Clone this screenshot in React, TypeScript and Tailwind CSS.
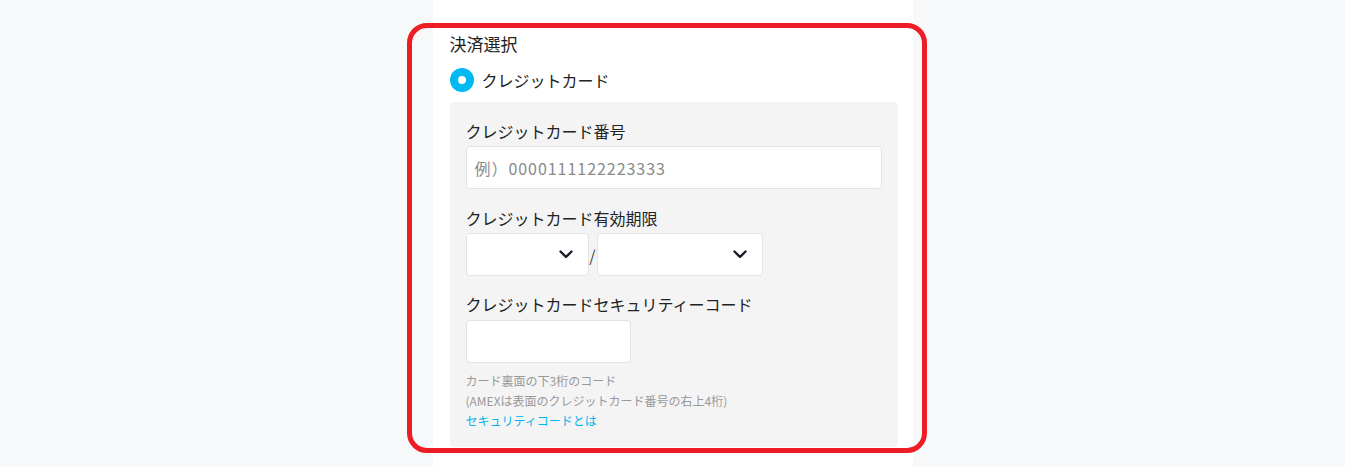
import React from 'react';

const Chevron: React.FC = () => (
  <svg className="w-[14px] h-[9px] text-[#1c1c28]" viewBox="0 0 14 9" fill="none">
    <path d="M1.5 1.5L7 7l5.5-5.5" stroke="currentColor" strokeWidth={2.4} strokeLinecap="round" strokeLinejoin="round" />
  </svg>
);

const SelectBox: React.FC<{ width: string }> = ({ width }) => (
  <div className={`${width} h-[43px] bg-white border border-[#e3e3e3] rounded-[4px] flex items-center justify-end pr-[15px]`}>
    <Chevron />
  </div>
);

export default function App() {
  return (
    <div
      className="min-h-[467px] bg-[#f7f8fa] text-[#222]"
      style={{ fontFamily: '"Noto Sans CJK JP", "Noto Sans", sans-serif' }}
    >
      <div className="relative mx-auto w-[480px] min-h-[467px] bg-white pl-[17px] pr-[15px] pt-[32px]">
        <h2 className="text-[17px] leading-[24px]">決済選択</h2>

        <label className="mt-[12px] flex items-center gap-[8px] h-[24px]">
          <span className="w-[24px] h-[24px] rounded-full bg-[#00b9f2] flex items-center justify-center">
            <span className="w-[8px] h-[8px] rounded-full bg-white" />
          </span>
          <span className="text-[16px] leading-[24px]">クレジットカード</span>
        </label>

        <div className="mt-[10px] bg-[#f4f4f4] rounded-[4px] px-[16px] pt-[17px] pb-[16px]">
          <p className="text-[16px] leading-[24px] mb-[3px]">クレジットカード番号</p>
          <div className="h-[43px] bg-white border border-[#e3e3e3] rounded-[4px] flex items-center pl-[8px] text-[16px] text-[#8a8a8a] tracking-[0.06em]">
            例）0000111122223333
          </div>

          <p className="text-[16px] leading-[24px] mt-[17px] mb-[3px]">クレジットカード有効期限</p>
          <div className="flex items-center">
            <SelectBox width="w-[123px]" />
            <span className="w-[8px] text-center text-[16px] text-[#444]">/</span>
            <SelectBox width="w-[166px]" />
          </div>

          <p className="text-[16px] leading-[24px] mt-[16px] mb-[4px]">クレジットカードセキュリティーコード</p>
          <div className="w-[165px] h-[43px] bg-white border border-[#e3e3e3] rounded-[4px]" />

          <div className="mt-[8px] text-[12px] leading-[20px] text-[#999]">
            <p>カード裏面の下3桁のコード</p>
            <p>(AMEXは表面のクレジットカード番号の右上4桁)</p>
            <a className="text-[#00b4f0]">セキュリティコードとは</a>
          </div>
        </div>

        <div className="absolute left-[-26px] top-[23px] w-[520px] h-[430px] border-[5px] border-[#ee1c25] rounded-[20px] pointer-events-none" />
      </div>
    </div>
  );
}
